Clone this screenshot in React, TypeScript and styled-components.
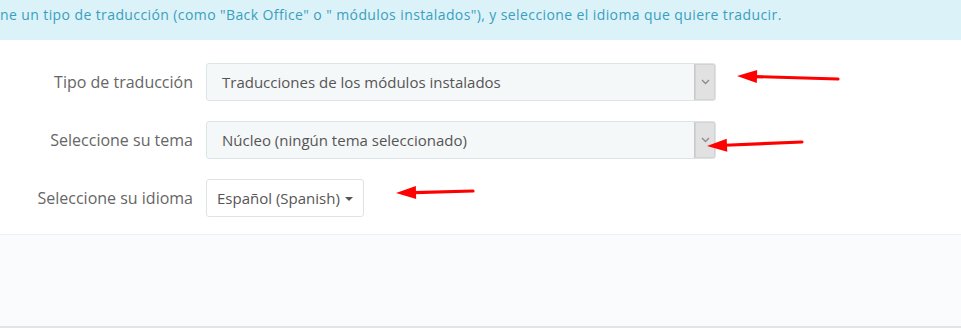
import styled, { createGlobalStyle } from 'styled-components'

const GlobalStyle = createGlobalStyle`
  html, body {
    margin: 0;
    padding: 0;
    background: #fff;
  }
  body {
    font-family: 'Open Sans', 'Liberation Sans', sans-serif;
    overflow: hidden;
  }
`

const Page = styled.div`
  position: relative;
  width: 961px;
  height: 328px;
  display: flex;
  flex-direction: column;
  overflow: hidden;
`

const InfoBar = styled.div`
  height: 40px;
  flex-shrink: 0;
  background: #dcf2f9;
  color: #3a9fbd;
  font-size: 14px;
  letter-spacing: 0.4px;
  line-height: 29px;
  white-space: nowrap;
`

const Form = styled.form`
  display: flex;
  flex-direction: column;
  gap: 20px;
  padding: 23px 0 0;
  height: 195px;
  flex-shrink: 0;
  box-sizing: border-box;
  border-bottom: 1px solid #eeeff1;
`

const Row = styled.div`
  display: grid;
  grid-template-columns: 193px 1fr;
  column-gap: 13px;
  align-items: center;
  height: 38px;
`

const Label = styled.label`
  text-align: right;
  color: #666;
  font-size: 16px;
`

const Select = styled.div`
  width: 510px;
  height: 38px;
  box-sizing: border-box;
  display: flex;
  align-items: stretch;
  background: #f5f8f9;
  border: 1px solid #dde4e8;
  border-radius: 3px;
  color: #555;
  font-size: 15px;
`

const SelectValue = styled.span`
  flex: 1;
  display: flex;
  align-items: center;
  padding-left: 15px;
`

const SelectToggle = styled.span`
  width: 20px;
  display: flex;
  align-items: center;
  justify-content: center;
  background: #e1e1e1;
  border-left: 1px solid #c9c9c9;
  border-radius: 0 2px 2px 0;
  box-shadow: inset 0 0 0 1px #d3d3d3;
`

const DropButton = styled.button`
  justify-self: start;
  height: 38px;
  padding: 0 10px;
  display: flex;
  align-items: center;
  gap: 5px;
  background: #fff;
  border: 1px solid #dfe3e6;
  border-radius: 3px;
  color: #555;
  font-family: inherit;
  font-size: 15px;
  width: 158px;
`

const Caret = styled.span`
  width: 0;
  height: 0;
  border-left: 4px solid transparent;
  border-right: 4px solid transparent;
  border-top: 4px solid #555;
  margin-top: 1px;
`

const Footer = styled.div`
  flex: 1;
  background: #fafbfd;
  border-bottom: 2px solid #e2e3e5;
`

const Arrows = styled.svg`
  position: absolute;
  left: 0;
  top: 0;
  pointer-events: none;
`

function Chevron() {
  return (
    <svg width="9" height="6" viewBox="0 0 9 6">
      <path d="M1 1 L4.5 4.5 L8 1" fill="none" stroke="#8a8a8a" strokeWidth="1.3" />
    </svg>
  )
}

function Arrow({ x1, y1, x2, y2 }: { x1: number; y1: number; x2: number; y2: number }) {
  // tail (x1,y1) -> tip (x2,y2)
  const dx = x2 - x1
  const dy = y2 - y1
  const len = Math.hypot(dx, dy)
  const ux = dx / len
  const uy = dy / len
  const head = 20
  const bx = x2 - ux * head
  const by = y2 - uy * head
  const px = -uy * 6.5
  const py = ux * 6.5
  return (
    <g>
      <line x1={x1} y1={y1} x2={bx + ux * 2} y2={by + uy * 2} stroke="#f00" strokeWidth="3.2" strokeLinecap="round" />
      <polygon points={`${x2},${y2} ${bx + px},${by + py} ${bx - px},${by - py}`} fill="#f00" />
    </g>
  )
}

export default function App() {
  return (
    <Page>
      <GlobalStyle />
      <InfoBar>
        ne un tipo de traducción (como "Back Office" o " módulos instalados"), y seleccione el idioma que quiere traducir.
      </InfoBar>
      <Form>
        <Row>
          <Label>Tipo de traducción</Label>
          <Select>
            <SelectValue>Traducciones de los módulos instalados</SelectValue>
            <SelectToggle>
              <Chevron />
            </SelectToggle>
          </Select>
        </Row>
        <Row>
          <Label>Seleccione su tema</Label>
          <Select>
            <SelectValue>Núcleo (ningún tema seleccionado)</SelectValue>
            <SelectToggle>
              <Chevron />
            </SelectToggle>
          </Select>
        </Row>
        <Row>
          <Label>Seleccione su idioma</Label>
          <DropButton type="button">
            Español (Spanish)
            <Caret />
          </DropButton>
        </Row>
      </Form>
      <Footer />
      <Arrows width="961" height="328">
        <Arrow x1={838} y1={79} x2={737} y2={76} />
        <Arrow x1={802} y1={142} x2={707} y2={146} />
        <Arrow x1={473} y1={191} x2={396} y2={193} />
      </Arrows>
    </Page>
  )
}
